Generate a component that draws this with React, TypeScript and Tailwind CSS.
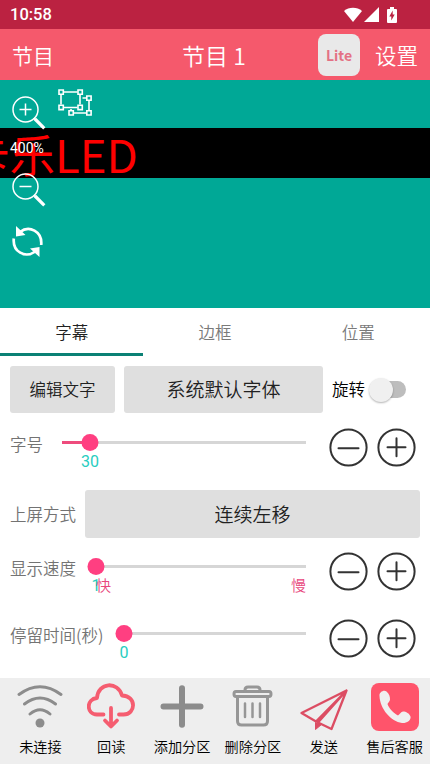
import { useState } from 'react'

const TABS = ['字幕', '边框', '位置']

function StepButton({ plus, onClick }: { plus?: boolean; onClick: () => void }) {
  return (
    <button type="button" onClick={onClick} className="h-[39px] w-[39px] shrink-0">
      <svg viewBox="0 0 39 39" fill="none" stroke="#333333" strokeWidth="2" strokeLinecap="round" className="h-full w-full">
        <circle cx="19.5" cy="19.5" r="18.1" />
        {plus ? <path d="M10.500 19.300h18M19.500 10.300v18" /> : <path d="M9.500 20.300h20" />}
      </svg>
    </button>
  )
}

interface SliderRowProps {
  label:      string
  max:        number
  initial:    number
  min?:       number
  // captions under both ends of the track
  ends?:      [string, string]
  className:  string
  labelClass: string
}

function SliderRow({ label, max, initial, min = 0, ends, className, labelClass }: SliderRowProps) {
  const [value, setValue] = useState(initial)
  const pos = ((value - min) / (max - min)) * 100

  return (
    <div className={`flex pl-[10px] pr-[14px] ${className}`}>
      <span className={`shrink-0 whitespace-nowrap pt-[2px] text-[16.500px] leading-[17px] text-[#737373] ${labelClass}`}>{label}</span>
      <div className="relative flex-1">
        <div className="flex h-[17px] items-center">
          <div className="h-[3px] w-full bg-[#d6d6d6]">
            <div className="h-full bg-[#ee4c7d]" style={{ width: `${pos}%` }} />
          </div>
        </div>
        <div
          className="absolute top-0 h-[17px] w-[17px] -translate-x-1/2 rounded-full bg-[#ff3f81]"
          style={{ left: `${pos}%` }}
        />
        <span
          className="absolute top-[19px] -translate-x-1/2 font-[Roboto] text-[16px] font-normal leading-[18px] text-[#28cdc0]"
          style={{ left: `${pos}%` }}
        >
          {value}
        </span>
        {ends && (
          <div className="relative mt-px flex justify-between text-[15px] leading-[18px] text-[#e8467c]">
            <span>{ends[0]}</span>
            <span>{ends[1]}</span>
          </div>
        )}
      </div>
      <div className="ml-[23px] mt-[-6px] flex gap-[9px]">
        <StepButton onClick={() => setValue(v => Math.max(min, v - 1))} />
        <StepButton plus onClick={() => setValue(v => Math.min(max, v + 1))} />
      </div>
    </div>
  )
}

function Magnifier({ plus }: { plus?: boolean }) {
  return (
    <svg viewBox="0 0 34 34" fill="none" stroke="white" className="block h-[34px] w-[34px]">
      <circle cx="13.5" cy="13.5" r="12.5" strokeWidth="1.5" />
      <path d={plus ? 'M7.500 13.500h12M13.500 7.500v12' : 'M7.500 13.500h12'} strokeWidth="1.5" />
      <path d="M21.800 22l2 2" strokeWidth="1.8" />
      <path d="M23 23l9.300 9.300" strokeWidth="3.200" />
    </svg>
  )
}

function StatusBar() {
  return (
    <div className="flex h-[29px] items-center justify-between bg-[#bb2241] pl-[10px] pr-[33px] text-white">
      <span className="pt-[2px] font-[Roboto] text-[16.500px] font-medium leading-none">10:58</span>
      <div className="flex items-center">
        <svg viewBox="0 0 18 15" fill="white" className="h-[15px] w-[18px]">
          <path d="M9 15L0 4C2.500 1.800 5.600.7 9 .7s6.500 1.100 9 3.300z" />
        </svg>
        <svg viewBox="0 0 15 15" fill="white" className="ml-[2px] h-[15px] w-[15px]">
          <path d="M0 15L15 0v15z" />
        </svg>
        <svg viewBox="0 0 10 16" className="ml-[8px] h-[16px] w-[10px]">
          <path d="M3 0h4v2h2q1 0 1 1v12q0 1-1 1H1q-1 0-1-1V3q0-1 1-1h2z" fill="white" />
          <path d="M5.700 3.500L2.300 9.500h2v4l3.400-6h-2z" fill="#bb2241" />
        </svg>
      </div>
    </div>
  )
}

function Preview() {
  return (
    <div className="relative h-[228px] shrink-0 overflow-hidden bg-[#00a896] pt-[48px]">
      <div className="h-[50px] overflow-hidden bg-black">
        <p className="ml-[-36px] whitespace-nowrap text-[45.500px] font-normal leading-[51px] text-[#ff0000]">卡乐LED</p>
      </div>
      <div className="absolute left-[12px] top-[16px]">
        <Magnifier plus />
      </div>
      <span className="absolute left-[10px] top-[60px] font-[Roboto] text-[14px] font-normal leading-[16px] text-white">400%</span>
      <div className="absolute left-[12px] top-[93px]">
        <Magnifier />
      </div>
      <svg viewBox="0 0 32 32" className="absolute left-[12px] top-[146px] h-[32px] w-[32px]">
        <g fill="none" stroke="white" strokeWidth="2.700">
          <path d="M8 6C17-1 30.500 5 29.200 19" />
          <path d="M1.800 12.500C.5 26 13 32.500 23.500 25.500" />
        </g>
        <path d="M4 0v10.500l9.500-1.500zM27.500 31V21l-9.500 1.500z" fill="white" />
      </svg>
      <svg viewBox="0 0 34 27" fill="none" stroke="white" strokeWidth="1.600" className="absolute left-[58px] top-[9px] h-[27px] w-[34px]">
        <path d="M5.500 3h14M3 5.500v10M5.500 18.500h14M22 5.500v10M24.500 9h4M31 11.500v10M15 24h14M13 20v2" />
        <path d="M1 1h4.300v4.300H1zM20 1h4.300v4.300H20zM1 16.300h4.300v4.300H1zM20 16.300h4.300v4.300H20zM28.800 7h4.300v4.300h-4.300zM28.800 21.700h4.300v4.300h-4.300zM11 21.700h4.300v4.300H11z" />
      </svg>
    </div>
  )
}

const ACTIONS = [
  {
    label: '未连接',
    icon: (
      <g fill="none" stroke="#8c8c8c" strokeWidth="2.900" strokeLinecap="round">
        <path d="M3 12.500Q24-3 45 12.500M8.500 22Q24 10 39.500 22M14 32Q24 23.500 34 32" />
        <circle cx="24" cy="41" r="4.500" fill="#8c8c8c" stroke="none" />
      </g>
    ),
  },
  {
    label: '回读',
    icon: (
      <g fill="none" stroke="#f55d70" strokeWidth="3.800" strokeLinecap="round" strokeLinejoin="round">
        <path d="M16.500 32.500H10C-1 32-1 17 10 16 11 0 31-1 35 13.500 50 14 49 32.500 36.500 32.500H32" />
        <path d="M24 26v18M18 38.500l6 6 6-6" />
      </g>
    ),
  },
  {
    label: '添加分区',
    icon: <path d="M24 6.300v36.500M5.500 24.500h37" fill="none" stroke="#8c8c8c" strokeWidth="6" strokeLinecap="round" />,
  },
  {
    label: '删除分区',
    icon: (
      <g fill="none" stroke="#969696" strokeWidth="3" strokeLinecap="round" strokeLinejoin="round">
        <path d="M7 9.500h33q2 0 2 2.500t-2 2.500H7q-2 0-2-2.500t2-2.500z" />
        <path d="M16 9.500V8q0-3 3-3h9q3 0 3 3v1.500M8.500 15v24q0 4 4 4h22q4 0 4-4V15" />
        <path d="M16 21.500v13.500M23.500 21.500v13.500M31 21.500v13.500" strokeWidth="2.500" />
      </g>
    ),
  },
  {
    label: '发送',
    icon: (
      <g fill="none" stroke="#dc4d63" strokeWidth="2.300" strokeLinejoin="round">
        <path d="M46.500 8.500L1.500 31 16 39.500zM46.500 8.500L31.500 47l-13.500-6.500z" />
        <path d="M15.500 40.500v7l6-5z" fill="#dc4d63" strokeWidth="1" />
      </g>
    ),
  },
  {
    label: '售后客服',
    icon: (
      <g>
        <rect x="0" y="1" width="48" height="48" rx="8" fill="#ff546b" />
        <path
          d="M8.500 14C8 10 13 7.500 15.500 9.500c3 2.500 3.500 5.500 3.500 8 0 2-2 3-2.500 4.500 1.500 4.500 6 9 10.500 11.500 1.500-1 3-4 5-4 3 0 6.500 2 7.500 5 1 4-4.500 7-8.500 6.500C20 39.500 9 27 8.500 14z"
          fill="#f0f0f0"
        />
      </g>
    ),
  },
]

export default function App() {
  const [tab,     setTab]     = useState(0)
  const [rotated, setRotated] = useState(false)

  return (
    <div className="flex h-[764px] w-[430px] flex-col overflow-hidden bg-white font-['Noto_Sans_CJK_SC',sans-serif] font-[350]">
      <StatusBar />
      <header className="grid h-[51px] grid-cols-[1fr_auto_1fr] items-center bg-[#f5596c] px-[12px] text-white">
        <span className="pt-px text-[21px] leading-none">节目</span>
        <h1 className="-ml-[2px] pt-px text-[23px] leading-none">节目 1</h1>
        <div className="flex items-center justify-end gap-[15px]">
          <span className="flex h-[42px] w-[42px] items-center justify-center rounded-[8px] bg-[#e9e9e9] text-[14px] font-bold leading-none text-[#e47184]">
            Lite
          </span>
          <span className="pt-px text-[21.500px] leading-none">设置</span>
        </div>
      </header>

      <Preview />

      <nav className="grid h-[48px] shrink-0 grid-cols-3">
        {TABS.map((name, i) => (
          <button
            key={name}
            type="button"
            onClick={() => setTab(i)}
            className={
              tab === i
                ? 'border-b-[3px] border-[#0b8175] pt-[3px] text-[16.500px] text-[#212121]'
                : 'border-b-[3px] border-transparent pt-[3px] text-[16.500px] text-[#7a7a7a]'
            }
          >
            {name}
          </button>
        ))}
      </nav>

      <main className="flex-1">
        <div className="mt-[10px] flex h-[47px] items-center pl-[10px]">
          <button type="button" className="h-full w-[105px] rounded-[3px] bg-[#dfdfdf] text-[16.500px] text-[#212121]">编辑文字</button>
          <button type="button" className="ml-[9px] h-full w-[199px] rounded-[3px] bg-[#dfdfdf] text-[19px] text-[#212121]">系统默认字体</button>
          <span className="ml-[9px] text-[16.500px] text-black">旋转</span>
          <button
            type="button"
            onClick={() => setRotated(!rotated)}
            className="ml-[4px] flex h-[24px] w-[37px] items-center"
          >
            <span className={rotated ? 'flex h-[17px] w-full items-center justify-end rounded-full bg-[#ff9fc0]' : 'ml-[6px] flex h-[17px] w-full items-center rounded-full bg-[#bdbdbd]'}>
              <span className="-ml-[6px] h-[24px] w-[24px] shrink-0 rounded-full bg-[#f0f0f0] shadow-[0_1px_2px_rgba(0,0,0,0.3)]" />
            </span>
          </button>
        </div>

        <SliderRow label="字号" max={262} initial={30} className="mt-[21px] h-[56px]" labelClass="w-[52px]" />

        <div className="flex h-[48px] items-center pl-[10px] pr-[10px]">
          <span className="w-[75px] shrink-0 whitespace-nowrap text-[16.500px] text-[#737373]">上屏方式</span>
          <button type="button" className="h-full flex-1 rounded-[3px] bg-[#dfdfdf] text-[19px] text-[#212121]">连续左移</button>
        </div>

        <SliderRow label="显示速度" min={1} max={16} initial={1} ends={['快', '慢']} className="mt-[20px] h-[67px]" labelClass="w-[86px]" />
        <SliderRow label="停留时间(秒)" max={60} initial={0} className="h-[53px]" labelClass="w-[114px]" />
      </main>

      <footer className="grid h-[86px] shrink-0 grid-cols-6 bg-[#eeeeee] pl-[5px]">
        {ACTIONS.map(({ label, icon }) => (
          <button key={label} type="button" className="flex flex-col items-center pt-[4px]">
            <svg viewBox="0 0 48 50" className="h-[50px] w-[48px] shrink-0">{icon}</svg>
            <span className="mt-[6px] whitespace-nowrap text-[14.200px] leading-[17px] text-black">{label}</span>
          </button>
        ))}
      </footer>
    </div>
  )
}
